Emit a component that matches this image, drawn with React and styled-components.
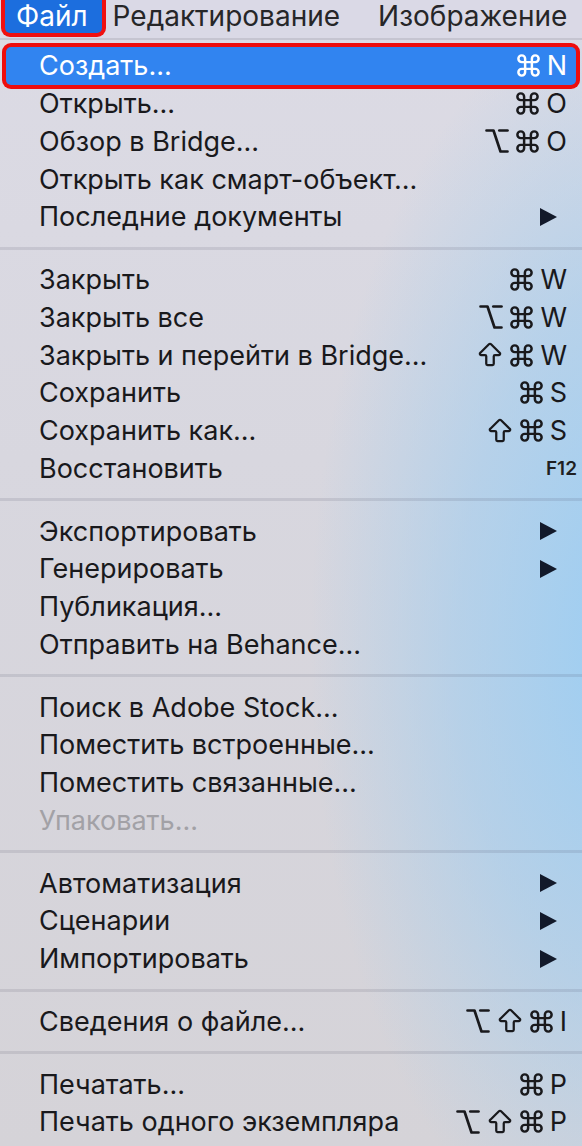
import React from "react";
import styled, { createGlobalStyle } from "styled-components";
import { Command, Option, ArrowBigUp } from "lucide-react";

const GlobalStyle = createGlobalStyle`
  html, body {
    margin: 0;
    padding: 0;
  }
  body {
    width: 582px;
    height: 1146px;
    overflow: hidden;
    font-family: Inter, "Noto Sans", "DejaVu Sans", sans-serif;
    background-color: #d8d7de;
    background-image:
      radial-gradient(ellipse 330px 640px at 640px 640px, rgba(150, 205, 245, 0.95), rgba(160, 205, 240, 0.6) 55%, rgba(200, 210, 225, 0) 100%),
      linear-gradient(180deg, #dcdbe5 0%, #d8d7df 40%, #d5d3d8 100%);
  }
`;

const Page = styled.div`
  width: 582px;
  height: 1146px;
`;

const MenuBar = styled.div`
  height: 38px;
  display: flex;
  align-items: flex-start;
  padding-left: 5px;
  background: #dad9e6;
  border-bottom: 2px solid #c6c5d1;
`;

const MenuTitle = styled.div`
  display: flex;
  align-items: center;
  height: 33px;
  padding: ${(p) => (p.active ? "0 14px 2px 11px" : "0 10px 2px 11px")};
  margin-right: ${(p) => p.gap || 0}px;
  font-size: 28px;
  color: ${(p) => (p.active ? "#ffffff" : "#262628")};
  background: ${(p) => (p.active ? "#1c6ede" : "transparent")};
  border-radius: ${(p) => (p.active ? "0 0 5px 5px" : "0")};
  box-shadow: ${(p) => (p.active ? "0 0 0 4px #f01010" : "none")};
  box-sizing: border-box;
  white-space: nowrap;
  position: relative;
  z-index: 1;
`;

const Menu = styled.div`
  padding-top: 7px;
`;

const Row = styled.div`
  height: 37.75px;
  display: flex;
  align-items: center;
  font-size: 27px;
  color: ${(p) => (p.disabled ? "#a2a1a6" : p.selected ? "#ffffff" : "#19191c")};
  background: ${(p) => (p.selected ? "#3184f0" : "transparent")};
  border-radius: ${(p) => (p.selected ? "5px" : "0")};
  box-shadow: ${(p) => (p.selected ? "0 0 0 4px #ee0d0d" : "none")};
  margin: ${(p) => (p.selected ? "0 6px" : "0")};
  padding-left: ${(p) => (p.selected ? "33px" : "39px")};
  padding-right: ${(p) => (p.selected ? "9px" : "15px")};
  position: relative;
`;

const Label = styled.span`
  flex: 1;
  white-space: nowrap;
`;

const Shortcut = styled.span`
  display: flex;
  align-items: center;
  gap: 3px;
  svg {
    display: block;
  }
`;

const KeyChar = styled.span`
  font-size: 27px;
  margin-left: 2px;
`;

const FKey = styled.span`
  font-size: 19px;
  font-weight: 600;
  margin-right: -10px;
  color: #1f1f22;
`;

const Arrow = styled.span`
  width: 0;
  height: 0;
  margin-right: 10px;
  border-top: 9px solid transparent;
  border-bottom: 9px solid transparent;
  border-left: 17px solid #12192a;
`;

const Separator = styled.div`
  height: 25px;
  display: flex;
  align-items: center;
  &::after {
    content: "";
    flex: 1;
    height: 3px;
    background: rgba(60, 60, 80, 0.12);
  }
`;

const ICONS = {
  cmd: { Icon: Command, size: 27, stroke: 2.2 },
  opt: { Icon: Option, size: 28, stroke: 2.3 },
  shift: { Icon: ArrowBigUp, size: 30, stroke: 1.8 },
};

const sections = [
  [
    { label: "Создать...", mods: ["cmd"], key: "N", selected: true },
    { label: "Открыть...", mods: ["cmd"], key: "O" },
    { label: "Обзор в Bridge...", mods: ["opt", "cmd"], key: "O" },
    { label: "Открыть как смарт-объект..." },
    { label: "Последние документы", submenu: true },
  ],
  [
    { label: "Закрыть", mods: ["cmd"], key: "W" },
    { label: "Закрыть все", mods: ["opt", "cmd"], key: "W" },
    { label: "Закрыть и перейти в Bridge...", mods: ["shift", "cmd"], key: "W" },
    { label: "Сохранить", mods: ["cmd"], key: "S" },
    { label: "Сохранить как...", mods: ["shift", "cmd"], key: "S" },
    { label: "Восстановить", fkey: "F12" },
  ],
  [
    { label: "Экспортировать", submenu: true },
    { label: "Генерировать", submenu: true },
    { label: "Публикация..." },
    { label: "Отправить на Behance..." },
  ],
  [
    { label: "Поиск в Adobe Stock..." },
    { label: "Поместить встроенные..." },
    { label: "Поместить связанные..." },
    { label: "Упаковать...", disabled: true },
  ],
  [
    { label: "Автоматизация", submenu: true },
    { label: "Сценарии", submenu: true },
    { label: "Импортировать", submenu: true },
  ],
  [{ label: "Сведения о файле...", mods: ["opt", "shift", "cmd"], key: "I" }],
  [
    { label: "Печатать...", mods: ["cmd"], key: "P" },
    { label: "Печать одного экземпляра", mods: ["opt", "shift", "cmd"], key: "P" },
  ],
];

const MenuItem = ({ item }) => (
  <Row selected={item.selected} disabled={item.disabled}>
    <Label>{item.label}</Label>
    {item.key && (
      <Shortcut>
        {item.mods.map((m) => {
          const { Icon, size, stroke } = ICONS[m];
          return <Icon key={m} size={size} strokeWidth={stroke} />;
        })}
        <KeyChar>{item.key}</KeyChar>
      </Shortcut>
    )}
    {item.fkey && <FKey>{item.fkey}</FKey>}
    {item.submenu && <Arrow />}
  </Row>
);

const App = () => {
  return (
    <Page>
      <GlobalStyle />
      <MenuBar>
        <MenuTitle active>Файл</MenuTitle>
        <MenuTitle gap={17}>Редактирование</MenuTitle>
        <MenuTitle>Изображение</MenuTitle>
      </MenuBar>
      <Menu>
        {sections.map((section, i) => (
          <React.Fragment key={i}>
            {i > 0 && <Separator />}
            {section.map((item) => (
              <MenuItem key={item.label} item={item} />
            ))}
          </React.Fragment>
        ))}
      </Menu>
    </Page>
  );
};

export default App;
